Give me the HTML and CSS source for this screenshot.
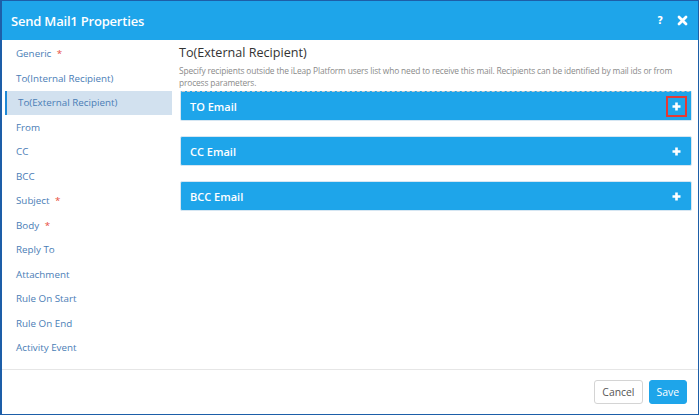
FILE: index.html
```html
<!DOCTYPE html>
<html>
  <head>
    <meta name="viewport" content="width=device-width, initial-scale=1.0">
    <link rel="stylesheet" href="styles.css">
  </head>
  <body>
    <div class="dialog">
      <div class="dialog-header">
        <div class="dialog-title">Send Mail1 Properties</div>
        <div class="header-tools">
          <span class="help">?</span>
          <svg class="close" width="11" height="11" viewBox="0 0 11 11">
            <path d="M2 2 L9 9 M9 2 L2 9" stroke="#fff" stroke-width="2.8" stroke-linecap="round"/>
          </svg>
        </div>
      </div>

      <div class="dialog-body">
        <div class="nav">
          <div class="nav-item">Generic <span class="req">*</span></div>
          <div class="nav-item">To(Internal Recipient)</div>
          <div class="nav-item active">To(External Recipient)</div>
          <div class="nav-item">From</div>
          <div class="nav-item">CC</div>
          <div class="nav-item">BCC</div>
          <div class="nav-item">Subject <span class="req">*</span></div>
          <div class="nav-item">Body <span class="req">*</span></div>
          <div class="nav-item">Reply To</div>
          <div class="nav-item">Attachment</div>
          <div class="nav-item">Rule On Start</div>
          <div class="nav-item">Rule On End</div>
          <div class="nav-item">Activity Event</div>
        </div>

        <div class="content">
          <h2>To(External Recipient)</h2>
          <p class="desc">Specify recipients outside the iLeap Platform users list who need to receive this mail. Recipients can be identified by mail ids or from process parameters.</p>

          <div class="panel first">
            <span>TO Email</span>
            <span class="add highlight">
              <svg width="9" height="9" viewBox="0 0 9 9"><path d="M4.5 0.5 V8.5 M0.5 4.5 H8.5" stroke="#fff" stroke-width="2.6"/></svg>
            </span>
          </div>
          <div class="panel">
            <span>CC Email</span>
            <span class="add">
              <svg width="9" height="9" viewBox="0 0 9 9"><path d="M4.5 0.5 V8.5 M0.5 4.5 H8.5" stroke="#fff" stroke-width="2.6"/></svg>
            </span>
          </div>
          <div class="panel">
            <span>BCC Email</span>
            <span class="add">
              <svg width="9" height="9" viewBox="0 0 9 9"><path d="M4.5 0.5 V8.5 M0.5 4.5 H8.5" stroke="#fff" stroke-width="2.6"/></svg>
            </span>
          </div>
        </div>
      </div>

      <div class="dialog-footer">
        <button class="btn">Cancel</button>
        <button class="btn btn-primary">Save</button>
      </div>
    </div>
  </body>
</html>
```

FILE: styles.css
```css
/* Page */
body {
  margin: 0;
  font-family: "Open Sans", "Liberation Sans", sans-serif;
  background-color: #ffffff;
}

/* Dialog frame */
.dialog {
  height: 415px;
  box-sizing: border-box;
  border: 1px solid #1d5ea8;
  border-left-width: 2px;
  display: flex;
  flex-direction: column;
}

.dialog-header {
  height: 39px;
  background-color: #1ea5ea;
  display: flex;
  align-items: center;
  justify-content: space-between;
  padding: 0 10px 0 9px;
  flex-shrink: 0;
}

.dialog-title {
  color: #ffffff;
  font-size: 13px;
  font-weight: 600;
  letter-spacing: -0.2px;
}

.header-tools {
  display: flex;
  align-items: center;
  gap: 14px;
}

.help {
  color: #ffffff;
  font-size: 10px;
  font-weight: 800;
  font-family: "DejaVu Sans", sans-serif;
}

/* Body */
.dialog-body {
  flex: 1;
  display: flex;
}

.nav {
  width: 172px;
  padding-top: 2px;
  flex-shrink: 0;
}

.nav-item {
  height: 24.5px;
  line-height: 24.5px;
  margin-left: 3px;
  width: 167px;
  box-sizing: border-box;
  padding-left: 11px;
  font-size: 9.8px;
  color: #4a7db6;
}

.nav-item.active {
  background-color: #d2e1ef;
  border-left: 2px solid #1e88d6;
  height: 24px;
  line-height: 24px;
  margin-bottom: 0.5px;
}

.req {
  color: #e74c3c;
  margin-left: 3px;
}

/* Content */
.content {
  flex: 1;
  padding: 0 6px 0 5px;
}

.content h2 {
  margin: 3px 0 0 0;
  font-size: 12.6px;
  font-weight: 400;
  color: #333333;
  line-height: 20px;
}

.desc {
  margin: 2px 0 2px 0;
  font-size: 8.4px;
  letter-spacing: -0.15px;
  line-height: 12px;
  color: #8a8a8a;
}

.panel {
  margin-top: 15px;
  margin-left: 1px;
  height: 30px;
  box-sizing: border-box;
  background-color: #1ea5ea;
  border: 1px solid #d6e6f2;
  border-radius: 2px;
  display: flex;
  align-items: center;
  justify-content: space-between;
  padding: 0 4px 0 9px;
  color: #ffffff;
  font-size: 11px;
  font-weight: 600;
}

.panel.first {
  margin-top: 0;
  border-top: 1px dashed #c8c8c8;
}

.add {
  width: 21px;
  height: 21px;
  box-sizing: border-box;
  display: flex;
  align-items: center;
  justify-content: center;
}

.add.highlight {
  border: 2px solid #e53935;
}

/* Footer */
.dialog-footer {
  height: 45px;
  flex-shrink: 0;
  border-top: 1px solid #e6e6e6;
  display: flex;
  justify-content: flex-end;
  align-items: flex-start;
  padding: 10px 11px 0 0;
  gap: 6px;
  box-sizing: border-box;
}

.btn {
  height: 24px;
  padding: 0 7px;
  font-family: "Open Sans", "Liberation Sans", sans-serif;
  font-size: 10.4px;
  color: #555555;
  background-color: #ffffff;
  border: 1px solid #d4d4d4;
  border-radius: 3px;
}

.btn-primary {
  background-color: #1ea5ea;
  border-color: #1ea5ea;
  color: #ffffff;
}
```
